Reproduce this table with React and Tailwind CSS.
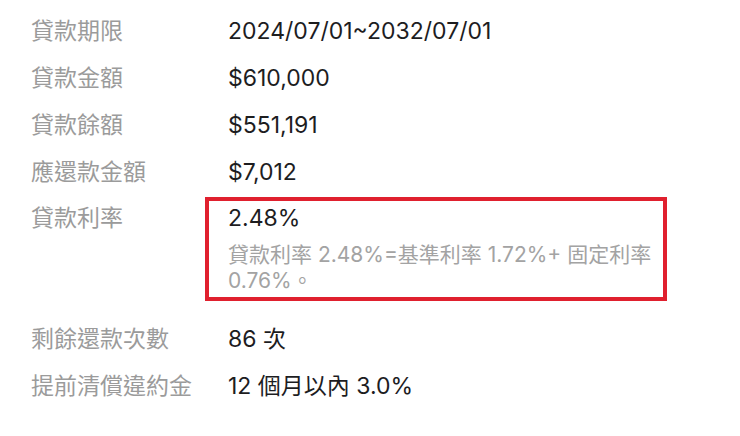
import React from 'react';

const rows = [
  { label: '貸款期限', value: '2024/07/01~2032/07/01' },
  { label: '貸款金額', value: '$610,000' },
  { label: '貸款餘額', value: '$551,191' },
  { label: '應還款金額', value: '$7,012' },
];

const tail = [
  { label: '剩餘還款次數', value: '86 次' },
  { label: '提前清償違約金', value: '12 個月以內 3.0%' },
];

const Row = ({ label, value }) => (
  <div className="flex h-[47px] items-center">
    <div className="w-[197px] shrink-0 text-[23px] text-[#9b9b9b]">{label}</div>
    <div className="text-[23px] text-[#1d1d1f]">{value}</div>
  </div>
);

export default function App() {
  return (
    <div
      className="w-[740px] h-[436px] bg-white pl-[31px] pt-[7px] leading-[28px] antialiased"
      style={{ fontFamily: 'Inter, "Noto Sans CJK TC", sans-serif' }}
    >
      {rows.map((r) => (
        <Row key={r.label} {...r} />
      ))}

      {/* 貸款利率 with the highlight box */}
      <div className="flex pt-[2px]">
        <div className="w-[197px] shrink-0 pt-[7px] text-[23px] text-[#9b9b9b]">貸款利率</div>
        <div className="-ml-[23px] w-[462px] border-4 border-[#e0202e] pl-[19px] pr-[4px] pt-[3px] pb-[3px]">
          <div className="text-[23px] text-[#1d1d1f]">2.48%</div>
          <div className="mt-[10px] text-[21px] leading-[26px] text-[#a3a3a3]">
            貸款利率 2.48%=基準利率 1.72%+ 固定利率 0.76%。
          </div>
        </div>
      </div>

      <div className="pt-[14px]">
        {tail.map((r) => (
          <Row key={r.label} {...r} />
        ))}
      </div>
    </div>
  );
}
